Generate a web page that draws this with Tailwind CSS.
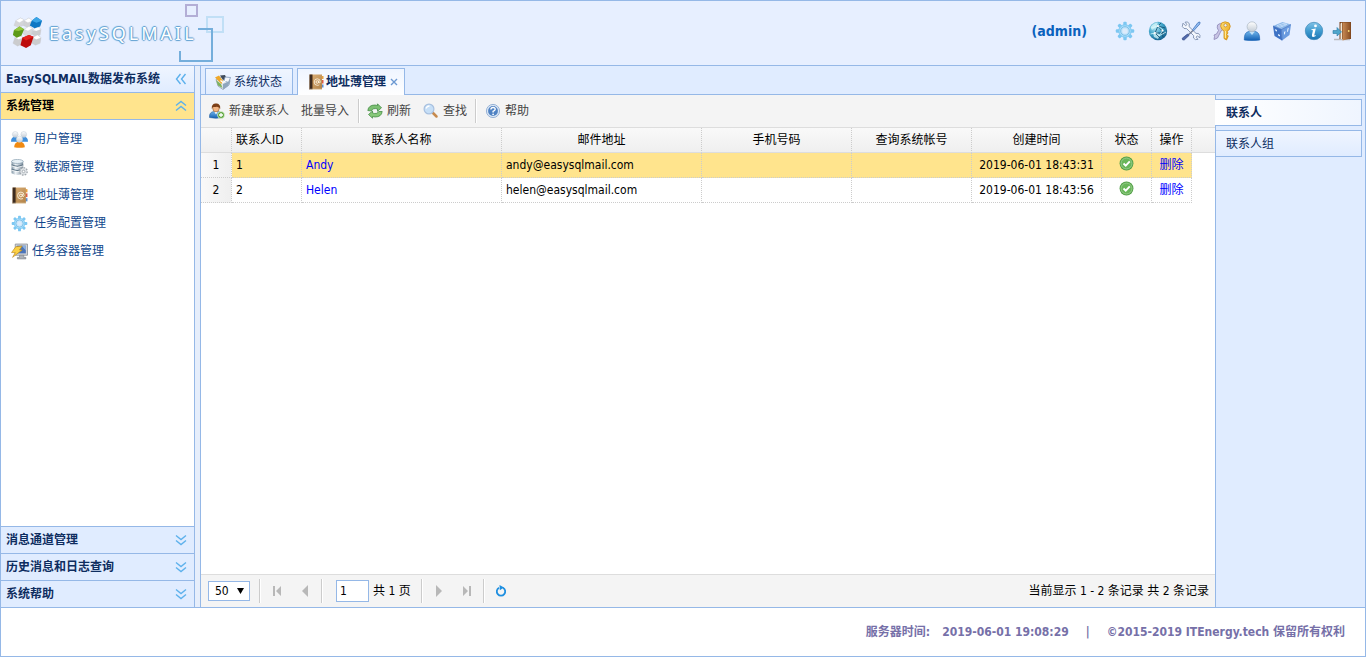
<!DOCTYPE html>
<html lang="zh-CN">
<head>
<meta charset="utf-8">
<title>EasySQLMAIL数据发布系统</title>
<script src="https://cdn.jsdelivr.net/npm/@tailwindcss/browser@4"></script>
</head>
<body class="flex h-screen flex-col overflow-hidden border border-[#95b8e7] bg-white font-['DejaVu_Sans_Condensed','Noto_Sans_CJK_SC',sans-serif] text-xs text-black">

<!-- Shared icon symbols -->
<svg width="0" height="0" class="absolute" aria-hidden="true">
  <defs>
    <linearGradient id="gBlue" x1="0" y1="0" x2="0" y2="1"><stop offset="0" stop-color="#6fb4ea"/><stop offset="1" stop-color="#1360b4"/></linearGradient>
    <linearGradient id="gGrey" x1="0" y1="0" x2="0" y2="1"><stop offset="0" stop-color="#ffffff"/><stop offset="1" stop-color="#c3ccd6"/></linearGradient>
    <linearGradient id="gSilver" x1="0" y1="0" x2="1" y2="0"><stop offset="0" stop-color="#8296a6"/><stop offset=".35" stop-color="#eef3f7"/><stop offset="1" stop-color="#7a8c9b"/></linearGradient>
    <linearGradient id="gBrown" x1="0" y1="0" x2="1" y2="1"><stop offset="0" stop-color="#dcb078"/><stop offset="1" stop-color="#b08248"/></linearGradient>
    <linearGradient id="gDoor" x1="0" y1="0" x2="1" y2="0"><stop offset="0" stop-color="#c98b55"/><stop offset="1" stop-color="#8a4f24"/></linearGradient>
    <linearGradient id="gGold" x1="0" y1="0" x2="1" y2="1"><stop offset="0" stop-color="#ffe27a"/><stop offset="1" stop-color="#e59a0c"/></linearGradient>
    <radialGradient id="gGlobe" cx=".35" cy=".3" r=".8"><stop offset="0" stop-color="#b9eaf5"/><stop offset=".5" stop-color="#3fa3c8"/><stop offset="1" stop-color="#0f5683"/></radialGradient>
    <linearGradient id="gInfo" x1="0" y1="0" x2="0" y2="1"><stop offset="0" stop-color="#83c3e6"/><stop offset=".5" stop-color="#3f9bd0"/><stop offset="1" stop-color="#1c75b3"/></linearGradient>
  </defs>
  <symbol id="gear" viewBox="0 0 20 20">
    <g fill="#7cc7f2"><rect x="8.300" y=".8" width="3.400" height="18.400" rx="1"/><rect x="8.300" y=".8" width="3.400" height="18.400" rx="1" transform="rotate(45 10 10)"/><rect x="8.300" y=".8" width="3.400" height="18.400" rx="1" transform="rotate(90 10 10)"/><rect x="8.300" y=".8" width="3.400" height="18.400" rx="1" transform="rotate(135 10 10)"/></g>
    <circle cx="10" cy="10" r="6.200" fill="#a9defa" stroke="#7cc7f2"/>
    <circle cx="10" cy="10" r="4.300" fill="#c3e4fa" stroke="#6fb6e2" stroke-width=".8"/>
    <circle cx="10" cy="10" r="2.600" fill="#dcebfb"/>
  </symbol>
  <symbol id="globe" viewBox="0 0 20 20">
    <circle cx="10" cy="10" r="9.200" fill="url(#gGlobe)"/>
    <path d="M2.500 6Q6 1.500 10 1.500L8 6 4 9ZM5 12l4-1 3 3-2 4-4-2Z" fill="#d5f6f8" opacity=".75"/>
    <path d="M10 5L7 12 12 17M7 12L17 12M10 5L14 10 15 16M13 2L10 5L17 7" fill="none" stroke="#124868" stroke-width=".8"/>
    <path d="M3 7L10 5 15 9 11 15 18 11M7 12L2.500 13" fill="none" stroke="#d9f7fa" stroke-width=".8"/>
    <g fill="#fff"><circle cx="10" cy="5" r="1.100"/><circle cx="7" cy="12" r="1.100"/><circle cx="14.500" cy="9.500" r="1.100"/></g>
  </symbol>
  <symbol id="tools" viewBox="0 0 20 20">
    <path d="M2 2.200L4.600 4.800 6 3.500 4 1.200Q7-.2 8.400 3L8 5.500 15 12.400Q18 11.500 19 14.500L18.700 17 16.500 14.800 15 16.200 17 18.400Q14 19.500 12.500 17L12.700 14.700 5.700 7.700Q2.500 8.300 1.300 5.500Z" fill="#f5f8fd" stroke="#7d8fae" stroke-width=".9"/>
    <path d="M11.500 8.800L17 1.500 19 1 18.800 3 12.400 10Z" fill="#8fbaf0" stroke="#4778bd" stroke-width=".8"/>
    <path d="M12 9.500L6 15" stroke="#777f96" stroke-width="1.500"/>
    <path d="M6.500 13L1.200 17.300Q1 19.500 3.200 19L8 14.500Z" fill="#526aac" stroke="#344c87" stroke-width=".7"/>
  </symbol>
  <symbol id="keys" viewBox="0 0 20 20">
    <path d="M5.500 4Q8 1 11 4L11.500 8 9 10 5.500 17 2 18.500 2.500 15.500 2 14 4.500 13 6.500 9.500Q4.500 7 5.500 4Z" fill="#c8c4e4" stroke="#8d87b7" stroke-width=".8"/>
    <path d="M9.500 2Q13-.3 17 2Q19.500 5 17 9L15 10 16 12 14.800 13.500 16.300 15 14.500 19 12 17.500 12 10 10 8.500Q7.500 5 9.500 2Z" fill="url(#gGold)" stroke="#cf8d14" stroke-width=".8"/>
    <circle cx="13.500" cy="4.300" r="1.600" fill="#e7efff" stroke="#b9790b" stroke-width=".6"/>
    <path d="M13.400 10V17" stroke="#fff0a8"/>
  </symbol>
  <symbol id="user" viewBox="0 0 20 20">
    <path d="M2.300 19Q2 11 7 10.500H13Q18 11 17.700 19Q10 20 2.300 19Z" fill="url(#gBlue)" stroke="#1b66b6" stroke-width=".7"/>
    <path d="M7 10.500L10 14 13 10.500Z" fill="#bfe0f8"/>
    <circle cx="10" cy="5.700" r="4.900" fill="url(#gGrey)" stroke="#b1bdc9" stroke-width=".8"/>
  </symbol>
  <symbol id="cube" viewBox="0 0 20 20">
    <path d="M1 5L10.500 1 19 3.500 9.500 8.500Z" fill="#8db9ea"/>
    <path d="M1 5L9.500 8.500 10 19.500 2.500 15Z" fill="#3e72c5"/>
    <path d="M9.500 8.500L19 3.500 17.500 14 10 19.500Z" fill="#6a9be0"/>
    <path d="M5 4.700L12 2.200 15 3.300 8 6.200ZM7.500 3.800L11 5.200M10.500 2.700L14 4" stroke="#cfe4fb" stroke-width=".7" fill="none"/>
    <path d="M3 8L5 9V10.500L3.500 10ZM6 13L8 14V15.500L6 14.500Z" fill="#e5f2ff"/>
    <path d="M12 11L13.500 10 13 13 12 13.800ZM15.500 7.500L16.800 6.800 16 10.500 15 11Z" fill="#eaf4ff"/>
    <path d="M1 5L9.500 8.500 19 3.500M9.500 8.500L10 19.500" stroke="#3a66b5" stroke-width=".6" fill="none"/>
  </symbol>
  <symbol id="info" viewBox="0 0 20 20">
    <circle cx="10" cy="10" r="8.700" fill="url(#gInfo)" stroke="#3b86b8" stroke-width=".7"/>
    <path d="M7.500 8.300L11.800 7.600 10.300 14Q10.200 15 12 14L11.700 15Q7.500 17.200 7.900 14L9 9.200 7.300 9Z" fill="#fff"/><circle cx="11.500" cy="4.900" r="1.400" fill="#fff"/>
  </symbol>
  <symbol id="door" viewBox="0 0 20 20">
    <path d="M2 18.500H18" stroke="#b9b9bd" stroke-width="1.500"/>
    <path d="M7.500 1H19V18H7.500Z" fill="#7a431c"/>
    <path d="M8.500 2.500L10 1.500V18H8.500Z" fill="#f1e8d8"/>
    <path d="M10.500 1.500H18.500V17.500L10.500 19.500Z" fill="url(#gDoor)"/>
    <circle cx="16.700" cy="10" r=".9" fill="#f9dc75"/>
    <path d="M1 9.500H5V6.500L9.500 11 5 15V12.500H1Z" fill="#4fa6cc" stroke="#2b7ba5" stroke-width=".6"/>
  </symbol>
  <symbol id="users" viewBox="0 0 16 16">
    <path d="M0 10Q0 5.500 4 5.500T8 10ZM8 10Q8 5.500 12 5.500T16 10Z" fill="#3f8fdc"/>
    <circle cx="4" cy="3.200" r="2.700" fill="url(#gGrey)" stroke="#c3ced9" stroke-width=".5"/><circle cx="12" cy="3.200" r="2.700" fill="url(#gGrey)" stroke="#c3ced9" stroke-width=".5"/>
    <path d="M3 15.300Q3 10 8 10T13 15.300Q8 16.300 3 15.300Z" fill="#f08a12"/>
    <circle cx="8" cy="7.700" r="2.900" fill="url(#gGrey)" stroke="#c3ced9" stroke-width=".5"/>
  </symbol>
  <symbol id="db" viewBox="0 0 16 16">
    <path d="M.5 2V13.500Q6 16.500 11.500 13.500V2Z" fill="url(#gSilver)"/>
    <ellipse cx="6" cy="2.300" rx="5.500" ry="1.900" fill="#e7f0f6" stroke="#8fa5b5" stroke-width=".7"/>
    <path d="M.5 5.500Q6 8.300 11.500 5.500M.5 9.500Q6 12.300 11.500 9.500" stroke="#5d7485" fill="none"/>
    <path d="M.5 6.500Q6 9.300 11.500 6.500M.5 10.500Q6 13.300 11.500 10.500" stroke="#fff" stroke-width=".7" fill="none"/>
    <circle cx="11.800" cy="11.700" r="3.400" fill="#dde1e4" stroke="#a0a7ad" stroke-width="1.400" stroke-dasharray="1.500 1.100"/>
    <circle cx="11.800" cy="11.700" r="2.700" fill="#dfe3e6"/><circle cx="11.800" cy="11.700" r="1.200" fill="#fff" stroke="#89929a" stroke-width=".6"/>
  </symbol>
  <symbol id="book" viewBox="0 0 16 16">
    <path d="M13.500 2H15.500V5H13.500Z" fill="#e9a23b"/><path d="M13.500 6H15.500V9.500H13.500Z" fill="#dd5c45"/><path d="M13.500 10.500H15.500V13.500H13.500Z" fill="#5b8fd0"/>
    <path d="M1.500.5H14V15.500H1.500Z" fill="url(#gBrown)"/>
    <path d="M1.500.5H4.500V15.500H1.500Z" fill="#3c2b20"/><path d="M4.500 1V15" stroke="#8e6535" stroke-width=".6"/>
    <path d="M2 15.300H14" stroke="#f4ead6" stroke-width=".7"/>
    <circle cx="9.300" cy="8" r="1.300" fill="none" stroke="#fff6e4" stroke-width=".9"/>
    <path d="M10.700 6.500V8.500Q12 9.700 12.300 8Q12.300 4.800 9.300 4.800T6.200 8T9.200 11.300Q10.500 11.300 11.300 10.800" fill="none" stroke="#fff6e4" stroke-width=".8"/>
  </symbol>
  <symbol id="pc" viewBox="0 0 16 16">
    <path d="M4 1H15.500V11.500H4Z" fill="#d5d7da" stroke="#8b9199" stroke-width=".8"/>
    <path d="M5.500 2.500H14V9.800H5.500Z" fill="#4c75b9"/><path d="M10 2.500H14V7Z" fill="#8db0df"/>
    <path d="M8 11.500H12V13.500H14V15H6V13.500H8Z" fill="#aeb2b8" stroke="#747a82" stroke-width=".5"/>
    <path d="M4.500 3.500L10.500 2.800 8 6.500H10.500L1.500 13.500 4 9H.5Z" fill="#fbd044" stroke="#bd861a" stroke-width=".6"/>
  </symbol>
  <symbol id="status" viewBox="0 0 16 16">
    <path d="M1 5.500L7 3 15 6.500 14 11 8 15.500 3 12Z" fill="#dfe5ec" stroke="#8392a5" stroke-width=".7"/>
    <path d="M0 3.500L4 1.500 8 7 6.500 10Z" fill="#f0a829"/><path d="M1 6L6 10 7.500 14 3 11.500Z" fill="#7fb45f"/>
    <path d="M5 1.500L10 1 11.500 4.500 8 6Z" fill="#404b5a"/><path d="M10 3L15.500 3.500 13.500 8.500 9 7Z" fill="#f4f7fb" stroke="#6e88aa" stroke-width=".7"/>
    <path d="M8 10L15 7 13 12 8 15.500Z" fill="#8fa6be"/><path d="M5.500 6.500L8 8.500 11 6.500" fill="none" stroke="#fff" stroke-width="1.300"/>
  </symbol>
  <symbol id="useradd" viewBox="0 0 16 16">
    <path d="M.5 14.500Q0 9 5 8.500H9Q13.500 9 13 14.500Q7 16 .5 14.500Z" fill="url(#gBlue)" stroke="#255f9e" stroke-width=".6"/>
    <path d="M5.300 8.500L7 11.500 8.700 8.500Z" fill="#fff"/>
    <ellipse cx="7" cy="5" rx="3.300" ry="3.900" fill="#f3b583" stroke="#93602d" stroke-width=".6"/>
    <path d="M2.800 6Q2.200.5 7 .5T11.200 6Q10.500 4 8 3.700Q5 4.200 4 3.900Z" fill="#7c3f17"/>
    <circle cx="12" cy="12" r="3.500" fill="#5ba53b" stroke="#e8f5df" stroke-width=".7"/><path d="M10 12H14M12 10V14" stroke="#fff" stroke-width="1.300"/>
  </symbol>
  <symbol id="refresh" viewBox="0 0 16 16">
    <path d="M.8 7.500Q1.500 2 8 2L10.500 2.500V.8L14.500 4.800 10.500 8.300V6Q6 4.500 4.300 8Z" fill="#7cc072" stroke="#38833a" stroke-width=".7"/>
    <path d="M15.200 8.500Q14.500 14 8 14L5.500 13.500V15.200L1.500 11.500 5.500 8V10Q10 11.500 11.700 8.500Z" fill="#86c878" stroke="#38833a" stroke-width=".7"/>
  </symbol>
  <symbol id="search" viewBox="0 0 16 16">
    <path d="M9.500 9.500L13.500 13.500" stroke="#c68a4e" stroke-width="2.500" stroke-linecap="round"/>
    <circle cx="6" cy="6" r="4.900" fill="#c6dff7" stroke="#a8c0df" stroke-width="1.200"/><path d="M3 5.500Q4 3 6.500 3" stroke="#fff" stroke-width="1.300" fill="none"/>
  </symbol>
  <symbol id="help" viewBox="0 0 16 16">
    <circle cx="8" cy="8" r="6.600" fill="#dbe7f5" stroke="#8facd3" stroke-width=".9"/>
    <circle cx="8" cy="8" r="4.900" fill="#4f82c3"/>
    <path d="M5.900 6.500Q6 4.500 8.100 4.500T10.200 6.300Q10.100 7.500 8.100 8.300V9.400" fill="none" stroke="#fff" stroke-width="1.400"/><circle cx="8.100" cy="11.300" r=".9" fill="#fff"/>
  </symbol>
  <symbol id="ok" viewBox="0 0 16 16">
    <circle cx="8" cy="8" r="7.400" fill="#4f9e43"/><circle cx="8" cy="8" r="5.900" fill="#69b65a" stroke="#a5d49a" stroke-width=".9"/>
    <path d="M4.800 8L7.200 10.400 11.500 5.800" fill="none" stroke="#fff" stroke-width="2"/>
  </symbol>
  <symbol id="chev" viewBox="0 0 12 12">
    <path d="M1 1.500L6 5.500 11 1.500M1 6.500L6 10.500 11 6.500" fill="none" stroke="#5db1ec" stroke-width="1.400"/>
  </symbol>
  <symbol id="logo" viewBox="0 0 33 34">
    <g stroke="#c2c6cb" stroke-width=".3">
      <path d="M4 4L9 1 13 3 12 9 7 11 2 9Z" fill="#d5d6d8"/><path d="M4 4L9 1 13 3 8 6Z" fill="#fff"/>
      <path d="M13 4L18 1 22 4 21 9 16 11 12 9Z" fill="#d0d1d3"/><path d="M13 4L18 1 22 4 17 6Z" fill="#fff"/>
      <path d="M13 13L18 10 22 12 21 19 16 21 12 18Z" fill="#d8d9db"/><path d="M13 13L18 10 22 12 17 15Z" fill="#fff"/>
      <path d="M22 14L27 10 31 13 30 19 25 21 21 18Z" fill="#cbccce"/><path d="M22 14L27 10 31 13 26 15Z" fill="#fff"/>
      <path d="M3 22L8 20 12 22 10 29 6 31 1 28Z" fill="#cbccce"/><path d="M3 22L8 20 12 22 7 24Z" fill="#fff"/>
      <path d="M22 22L27 19 31 22 30 28 25 30 21 28Z" fill="#cbccce"/><path d="M22 22L27 19 31 22 26 24Z" fill="#fff"/>
    </g>
    <path d="M21 4L26 0 32 4 30 10 24 12 19 9Z" fill="#0f78c4"/><path d="M21 4L26 0 32 4 26 6Z" fill="#3ba5e6"/>
    <path d="M2 14L8 10 13 13 10 20 5 22 1 19Z" fill="#5c9a18"/><path d="M2 14L8 10 13 13 7 15Z" fill="#95c83e"/>
    <path d="M11 22L18 19 23 21 20 30 15 33 9 30Z" fill="#bd0b0b"/><path d="M11 22L18 19 23 21 15 25Z" fill="#e6211c"/>
  </symbol>
</svg>

<header class="flex h-[65px] shrink-0 items-center justify-between border-b border-[#95b8e7] bg-[#e7efff] pr-3 pl-[11px]">
  <div class="relative flex items-center gap-1.5">
    <svg class="h-8 w-[31px]" aria-hidden="true"><use href="#logo"/></svg>
    <span class="font-['Noto_Sans',sans-serif] text-lg tracking-[3px] text-white [text-shadow:1px_0_1px_#5f9fd0,-1px_0_1px_#5f9fd0,0_1px_1px_#5f9fd0,0_-1px_1px_#5f9fd0]">EasySQLMAIL</span>
    <svg class="absolute -top-3.5 left-[165px] h-[60px] w-12" viewBox="0 0 48 60" fill="none" aria-hidden="true">
      <rect x="9" y="2" width="11" height="11" stroke="#b3aed6" stroke-width="2"/>
      <rect x="30" y="14" width="16" height="15" stroke="#c1dff6" stroke-width="2"/>
      <path d="M21 26H35V58H3V48" stroke="#75aedb" stroke-width="2"/>
    </svg>
  </div>
  <div class="flex items-center pb-1">
    <strong class="mr-[21px] text-sm text-[#0a62bd]">(admin)</strong>
    <nav class="flex items-center [&>button]:flex [&>button]:justify-center" aria-label="系统工具">
      <button class="w-[33px]" aria-label="设置"><svg class="size-5"><use href="#gear"/></svg></button>
      <button class="w-[33px]" aria-label="网络"><svg class="size-5"><use href="#globe"/></svg></button>
      <button class="w-[33px]" aria-label="工具"><svg class="size-5"><use href="#tools"/></svg></button>
      <button class="w-[30px]" aria-label="密码"><svg class="size-5"><use href="#keys"/></svg></button>
      <button class="w-[30px]" aria-label="用户"><svg class="size-5"><use href="#user"/></svg></button>
      <button class="w-[30px]" aria-label="模块"><svg class="size-5"><use href="#cube"/></svg></button>
      <button class="w-[34px]" aria-label="关于"><svg class="size-5"><use href="#info"/></svg></button>
      <button class="w-[22px]" aria-label="退出"><svg class="size-5"><use href="#door"/></svg></button>
    </nav>
  </div>
</header>

<div class="flex min-h-0 flex-1 bg-[#e6eefb]">
  <aside class="mr-[5px] flex w-[194px] shrink-0 flex-col border-r border-[#95b8e7] bg-white font-bold text-[#0e2d5f]">
    <div class="flex h-[27px] items-center justify-between border-b border-[#95b8e7] bg-linear-to-b from-[#eff5ff] to-[#e0ecff] pr-[7px] pl-[5px]">
      <h1>EasySQLMAIL数据发布系统</h1>
      <button aria-label="收起"><svg class="size-3 rotate-90"><use href="#chev"/></svg></button>
    </div>
    <button class="flex h-[27px] items-center justify-between border-b border-[#95b8e7] bg-[#ffe48d] pr-[7px] pl-[5px] text-black">系统管理<svg class="size-3 rotate-180"><use href="#chev"/></svg></button>
    <nav class="flex flex-1 flex-col pt-[5px] pl-2.5 font-normal text-[#10478c] [&>a]:flex [&>a]:h-7 [&>a]:items-center [&>a]:gap-1.5 [&_svg]:size-[17px]" aria-label="系统管理">
      <a href="#"><svg><use href="#users"/></svg>用户管理</a>
      <a href="#"><svg><use href="#db"/></svg>数据源管理</a>
      <a href="#"><svg><use href="#book"/></svg>地址薄管理</a>
      <a href="#"><svg><use href="#gear"/></svg>任务配置管理</a>
      <a href="#" class="gap-1!"><svg><use href="#pc"/></svg>任务容器管理</a>
    </nav>
    <button class="flex h-[27px] items-center justify-between border-t border-[#95b8e7] bg-[#e0ecff] pr-[7px] pl-[5px]">消息通道管理<svg class="size-3"><use href="#chev"/></svg></button>
    <button class="flex h-[27px] items-center justify-between border-t border-[#95b8e7] bg-[#e0ecff] pr-[7px] pl-[5px]">历史消息和日志查询<svg class="size-3"><use href="#chev"/></svg></button>
    <button class="flex h-[27px] items-center justify-between border-t border-[#95b8e7] bg-[#e0ecff] pr-[7px] pl-[5px]">系统帮助<svg class="size-3"><use href="#chev"/></svg></button>
  </aside>

  <main class="flex min-w-0 flex-1 flex-col border-l border-[#95b8e7] bg-white">
    <div class="flex h-[29px] shrink-0 items-end gap-1 border-b border-[#95b8e7] bg-[#e0ecff] pl-1 text-[#0e2d5f]" role="tablist">
      <button role="tab" class="flex h-[26px] items-center gap-[3px] border border-b-0 border-[#95b8e7] bg-linear-to-b from-[#eff5ff] to-[#e0ecff] pr-2.5 pl-[9px]"><svg class="size-4"><use href="#status"/></svg>系统状态</button>
      <div class="-mb-px flex h-[27px] items-center border border-b-0 border-[#95b8e7] bg-linear-to-b from-[#eff5ff] to-white pr-1.5 pl-2.5">
        <button role="tab" aria-selected="true" class="flex items-center gap-0.5 font-bold"><svg class="size-4"><use href="#book"/></svg>地址薄管理</button>
        <button class="ml-1 flex size-2 items-center" aria-label="关闭"><svg class="size-2" viewBox="0 0 8 8"><path d="M1 1L7 7M7 1L1 7" stroke="#6b98d2" stroke-width="1.400"/></svg></button>
      </div>
    </div>

    <div class="flex min-h-0 flex-1">
      <section class="flex min-w-0 flex-1 flex-col">
        <div class="flex h-[33px] shrink-0 items-center border-b border-[#ddd] bg-[#f4f4f4] text-[#444] [&>button]:flex [&>button]:items-center [&>button]:gap-1 [&_svg]:size-4">
          <button class="ml-2"><svg><use href="#useradd"/></svg>新建联系人</button>
          <button class="ml-3">批量导入</button>
          <i class="ml-[9px] h-6 border-r border-l border-r-white border-l-[#ccc]"></i>
          <button class="ml-[7px]"><svg><use href="#refresh"/></svg>刷新</button>
          <button class="ml-3"><svg><use href="#search"/></svg>查找</button>
          <i class="ml-2 h-6 border-r border-l border-r-white border-l-[#ccc]"></i>
          <button class="ml-2"><svg><use href="#help"/></svg>帮助</button>
        </div>

        <div class="min-h-0 flex-1 overflow-hidden">
          <table class="w-full table-fixed border-separate border-spacing-0 [&_td]:h-[25px] [&_td]:border-dotted [&_td]:border-[#ccc] [&_td]:px-1 [&_td]:py-0 [&_th]:h-[25px] [&_th]:border-b [&_th]:border-b-[#ddd] [&_th]:bg-linear-to-b [&_th]:from-[#f9f9f9] [&_th]:to-[#efefef] [&_th]:px-1 [&_th]:py-0 [&_th]:font-normal [&_td:not(:last-child)]:border-r [&_td:not(:last-child)]:border-b [&_th:not(:last-child)]:[border-right:1px_dotted_#ccc]">
            <colgroup><col class="w-[31px]"><col class="w-[70px]"><col class="w-[200px]"><col class="w-[200px]"><col class="w-[150px]"><col class="w-[120px]"><col class="w-[130px]"><col class="w-[50px]"><col class="w-10"><col></colgroup>
            <thead>
              <tr><th></th><th class="text-left">联系人ID</th><th>联系人名称</th><th>邮件地址</th><th>手机号码</th><th>查询系统帐号</th><th>创建时间</th><th>状态</th><th>操作</th><th></th></tr>
            </thead>
            <tbody>
              <tr class="[&>td:not(:first-child):not(:last-child)]:bg-[#ffe48d]">
                <td class="bg-linear-to-r from-[#f9f9f9] to-[#efefef] text-center">1</td><td>1</td><td><a href="#" class="text-[#00f]">Andy</a></td><td>andy@easysqlmail.com</td><td></td><td></td><td class="text-center">2019-06-01 18:43:31</td>
                <td class="align-top"><svg class="mx-auto mt-[3px] size-[15px]" role="img" aria-label="正常"><use href="#ok"/></svg></td><td class="text-center"><a href="#" class="text-[#00f]">删除</a></td><td></td>
              </tr>
              <tr>
                <td class="bg-linear-to-r from-[#f9f9f9] to-[#efefef] text-center">2</td><td>2</td><td><a href="#" class="text-[#00f]">Helen</a></td><td>helen@easysqlmail.com</td><td></td><td></td><td class="text-center">2019-06-01 18:43:56</td>
                <td class="align-top"><svg class="mx-auto mt-[3px] size-[15px]" role="img" aria-label="正常"><use href="#ok"/></svg></td><td class="text-center"><a href="#" class="text-[#00f]">删除</a></td><td></td>
              </tr>
            </tbody>
          </table>
        </div>

        <div class="flex h-[33px] shrink-0 items-center border-t border-[#ddd] bg-[#f4f4f4] pr-1.5 pl-[7px]">
          <div class="relative">
            <select aria-label="每页条数" class="block h-5 w-[42px] appearance-none border border-[#95b8e7] bg-white pl-1.5"><option>50</option></select>
            <svg class="pointer-events-none absolute top-1.5 right-1.5 h-2 w-[7px]" viewBox="0 0 7 8"><path d="M0 1H7L3.500 7Z"/></svg>
          </div>
          <i class="ml-[9px] h-6 border-r border-l border-r-white border-l-[#ccc]"></i>
          <button class="ml-[11px]" aria-label="首页"><svg class="h-3 w-2.5" viewBox="0 0 10 12" fill="#b8b8b8"><path d="M1 1H3V11H1ZM9 1V11L4 6Z"/></svg></button>
          <button class="ml-[18px]" aria-label="上一页"><svg class="h-3 w-2.5" viewBox="0 0 10 12" fill="#b8b8b8"><path d="M8 0V12L2 6Z"/></svg></button>
          <i class="ml-[11px] h-6 border-r border-l border-r-white border-l-[#ccc]"></i>
          <label class="ml-[13px] flex items-center gap-1"><input aria-label="页码" value="1" class="h-[22px] w-[33px] border border-[#95b8e7] bg-white px-[3px]">共 1 页</label>
          <i class="ml-2.5 h-6 border-r border-l border-r-white border-l-[#ccc]"></i>
          <button class="ml-[11px]" aria-label="下一页"><svg class="h-3 w-2.5" viewBox="0 0 10 12" fill="#b8b8b8"><path d="M2 0V12L8 6Z"/></svg></button>
          <button class="ml-[18px]" aria-label="末页"><svg class="h-3 w-2.5" viewBox="0 0 10 12" fill="#b8b8b8"><path d="M7 1H9V11H7ZM1 1V11L6 6Z"/></svg></button>
          <i class="ml-[11px] h-6 border-r border-l border-r-white border-l-[#ccc]"></i>
          <button class="ml-2.5" aria-label="刷新"><svg class="size-3" viewBox="0 0 12 12"><path d="M8 2.700A4.200 4.200 0 1 1 4 2.700" fill="none" stroke="#1f8fe0" stroke-width="1.800"/><path d="M4.500 0L9 2.500 4.800 5.300Z" fill="#1f8fe0"/></svg></button>
          <span class="ml-auto">当前显示 1 - 2 条记录 共 2 条记录</span>
        </div>
      </section>

      <div role="tablist" aria-orientation="vertical" class="flex w-[150px] shrink-0 flex-col gap-1 border-l border-[#95b8e7] bg-[#e0ecff] pt-1 pr-[3px] text-[#0e2d5f] [&>button]:h-[27px] [&>button]:border [&>button]:border-l-0 [&>button]:border-[#95b8e7] [&>button]:text-left">
        <button role="tab" aria-selected="true" class="-ml-px bg-linear-to-r from-white to-[#eff5ff] pl-[11px] font-bold">联系人</button>
        <button role="tab" class="bg-linear-to-b from-[#eff5ff] to-[#e0ecff] pl-2.5">联系人组</button>
      </div>
    </div>
  </main>
</div>

<footer class="flex h-[49px] shrink-0 items-center justify-end border-t border-[#95b8e7] pr-5 font-bold text-[#7670a8]">
  <span>服务器时间:</span><time class="ml-3">2019-06-01 19:08:29</time><span class="mx-[17px]">|</span><span>©2015-2019 ITEnergy.tech 保留所有权利</span>
</footer>
</body>
</html>
